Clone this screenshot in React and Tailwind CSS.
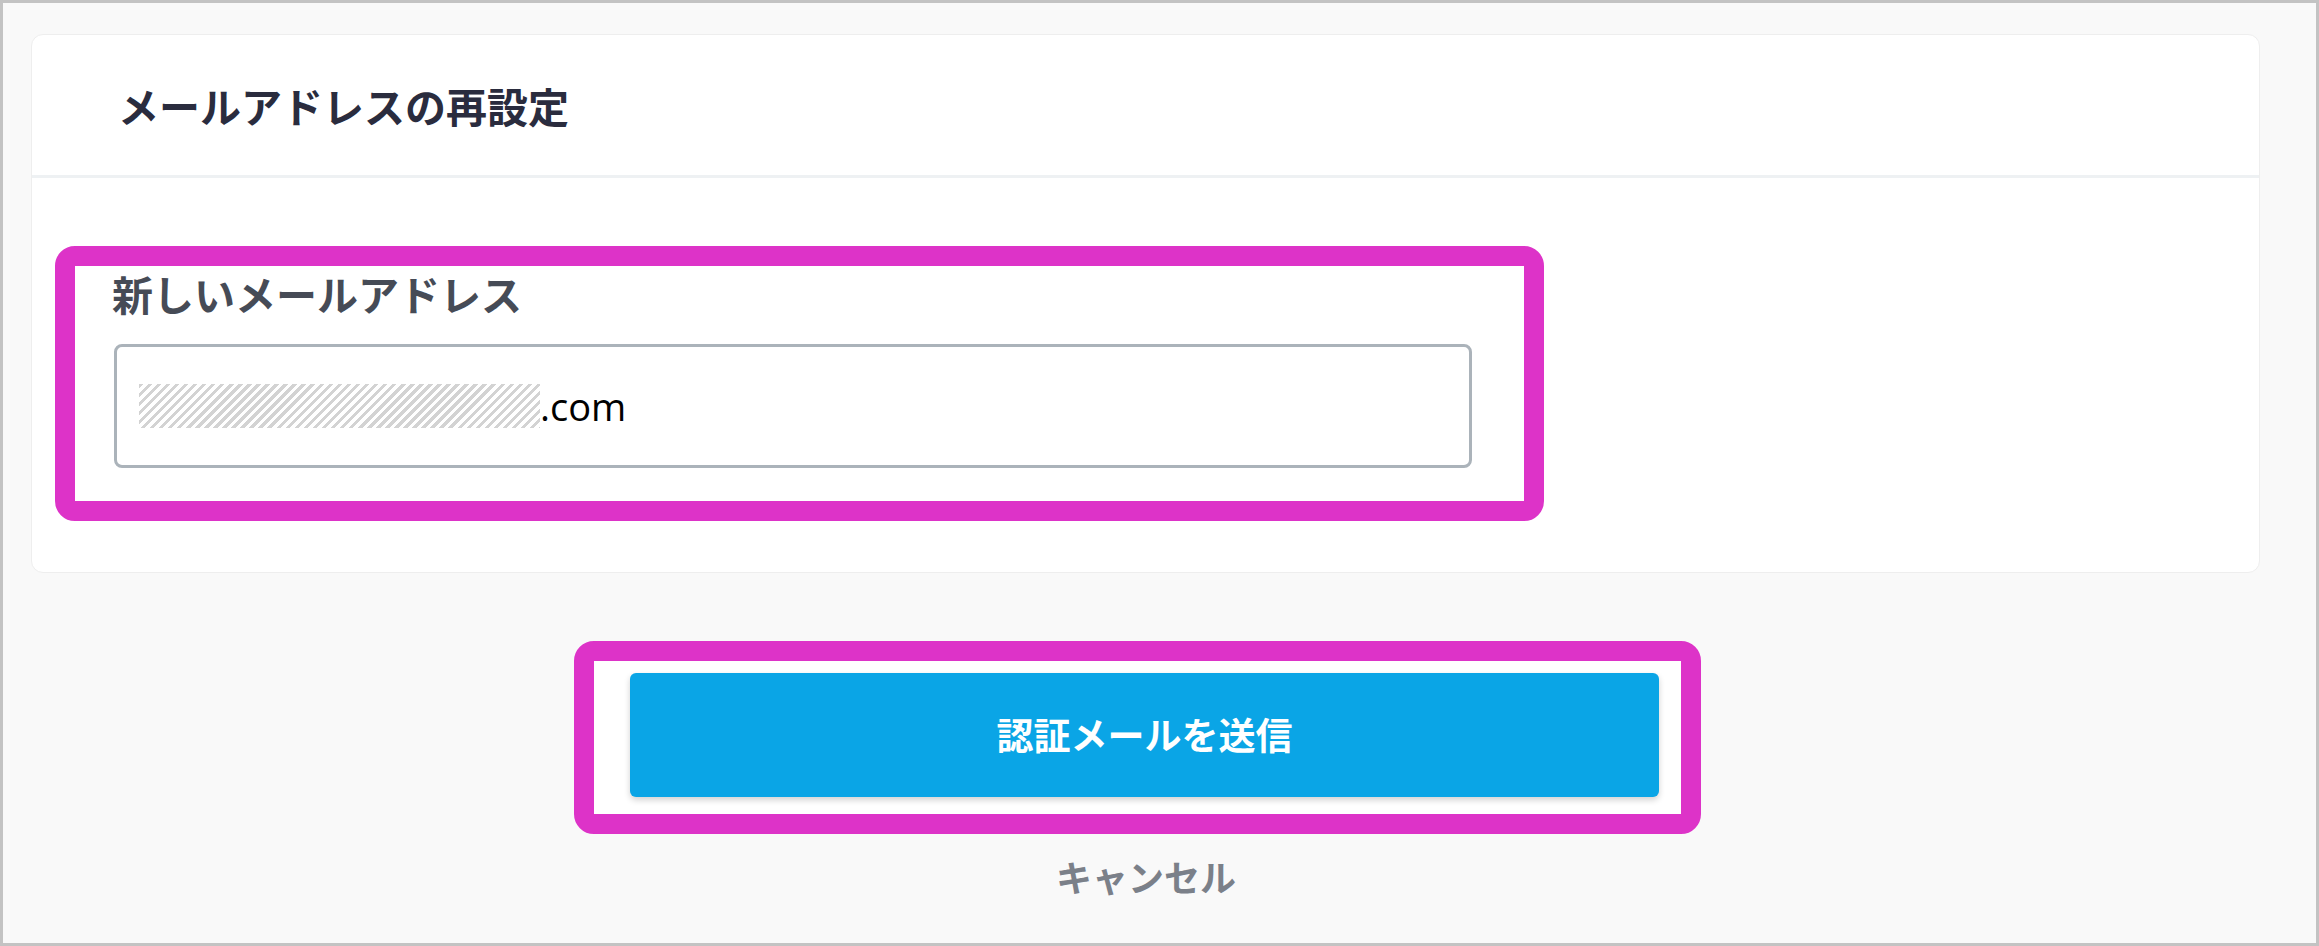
import React, { useState } from "react";

const EmailReset = () => {
  const [email, setEmail] = useState("com");

  return (
    <div className="w-[2319px] h-[946px] border-[3px] border-[#c3c3c3] bg-[#f9f9f9] pl-[28px] pt-[31px] pr-[56px] font-['Noto_Sans_CJK_JP',sans-serif]">
      <div className="bg-white rounded-[12px] border border-[#eeeeee]">
        <div className="h-[143px] flex items-center pl-[86px] border-b-[3px] border-[#eef1f3]">
          <h2 className="text-[41px] leading-[48px] font-bold text-[#2a2c3e]">
            メールアドレスの再設定
          </h2>
        </div>
        <div className="pt-[68px] pb-[51px] pl-[23px]">
          <div className="w-[1489px] h-[275px] border-[20px] border-[#dd33c8] rounded-[20px] bg-white pl-[37px] pt-[3px]">
            <label className="block text-[41px] leading-[48px] font-bold text-[#464b56]">
              新しいメールアドレス
            </label>
            <div className="mt-[27px] ml-[2px] w-[1358px] h-[124px] border-[3px] border-[#abb3ba] rounded-[8px] flex items-center pl-[22px]">
              <div className="w-[401px] h-[44px] bg-[repeating-linear-gradient(135deg,#d3d3d3_0_3.2px,#ffffff_3.2px_6.4px)]"></div>
              <span className="text-[38px] text-black font-['Open_Sans',sans-serif] leading-none">
                .{email}
              </span>
            </div>
          </div>
        </div>
      </div>

      <div className="w-[2230px]">
        <div className="mt-[68px] ml-[543px] w-[1127px] h-[193px] border-[20px] border-[#dd33c8] rounded-[20px] bg-white pt-[12px] pl-[36px]">
          <button
            type="button"
            className="w-[1029px] h-[124px] bg-[#0aa5e6] rounded-[6px] shadow-[0_3px_6px_rgba(0,0,0,0.18)] text-white text-[37px] font-bold"
          >
            認証メールを送信
          </button>
        </div>
        <p className="mt-[18px] text-center text-[36px] leading-[48px] font-bold text-[#7b8089]">
          キャンセル
        </p>
      </div>
    </div>
  );
};

export default function App() {
  return <EmailReset />;
}
